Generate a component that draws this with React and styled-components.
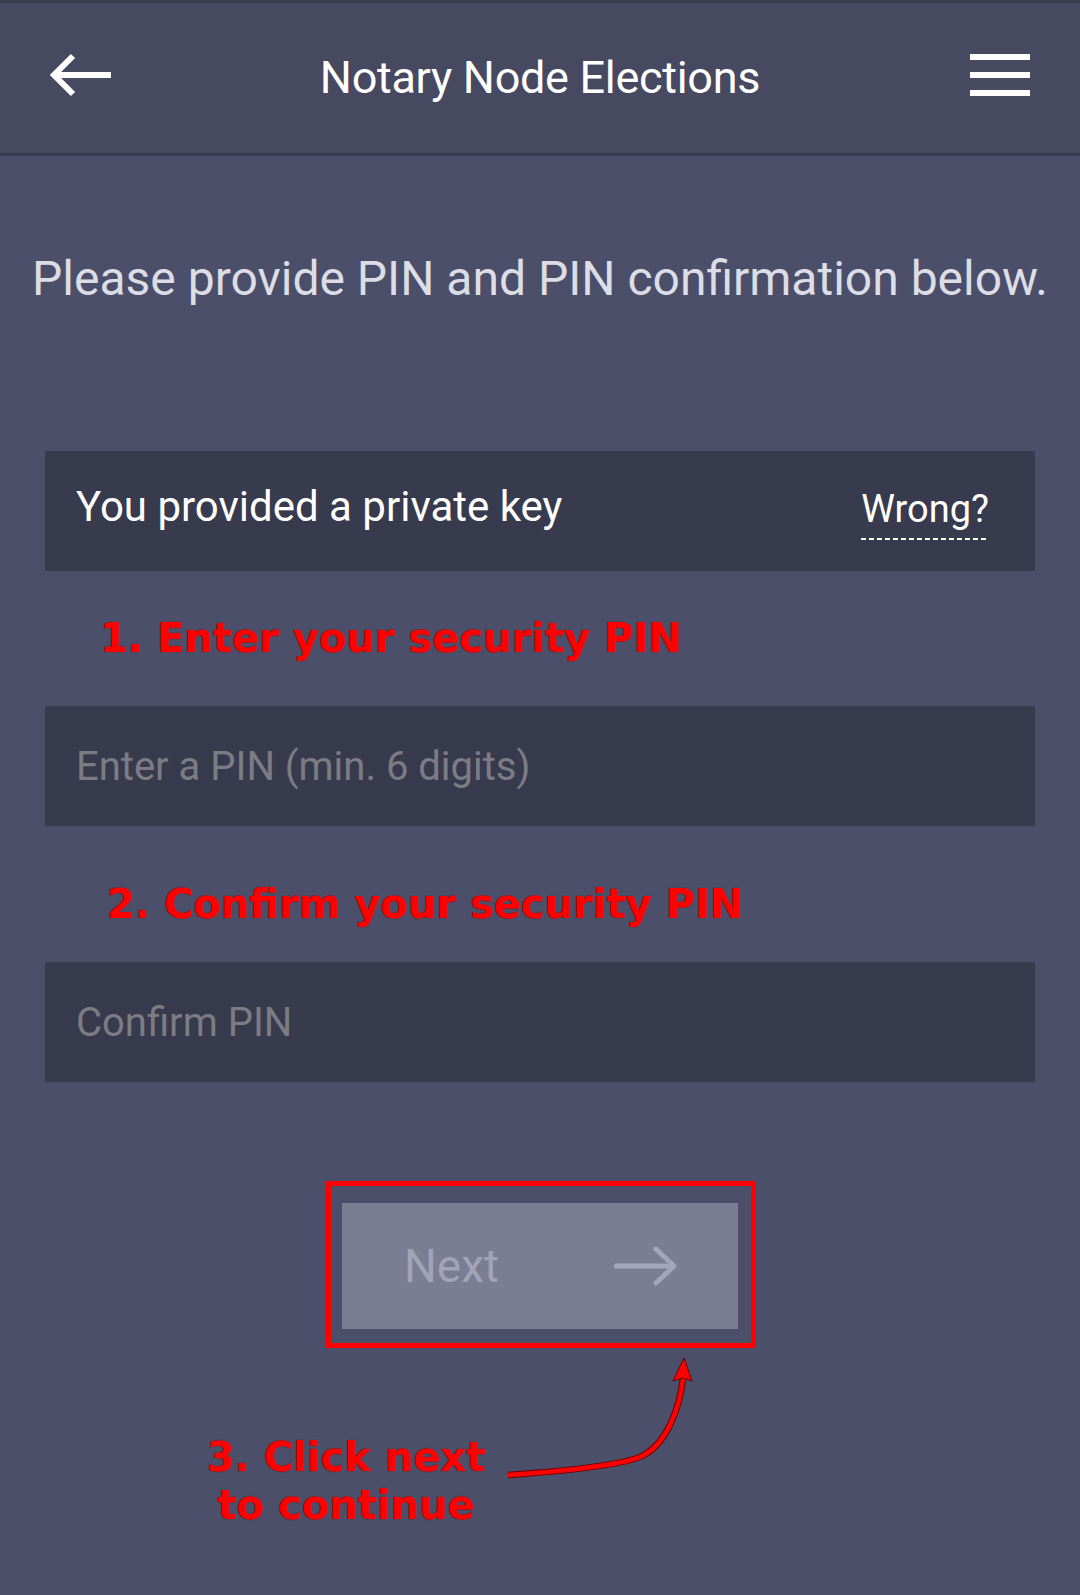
import React from 'react';
import styled, { createGlobalStyle } from 'styled-components';

const GlobalStyle = createGlobalStyle`
  html, body {
    margin: 0;
    padding: 0;
    background: #4b4f6a;
  }
  body {
    font-family: Roboto, "Noto Sans", sans-serif;
  }
`;

const Page = styled.div`
  min-height: 1595px;
  background: #4b4f6a;
  display: flex;
  flex-direction: column;
`;

const TopBar = styled.header`
  height: 150px;
  background: #464960;
  border-top: 3px solid #383a4d;
  border-bottom: 3px solid #3a3c50;
  display: flex;
  align-items: center;
  justify-content: space-between;
  padding: 0 50px;
  position: relative;

  h1 {
    position: absolute;
    left: 0;
    right: 0;
    top: 0;
    bottom: 0;
    margin: 0;
    display: flex;
    align-items: center;
    justify-content: center;
    font-size: 45px;
    font-weight: 400;
    color: #ffffff;
    letter-spacing: -0.3px;
    pointer-events: none;
    padding-bottom: 2px;
  }
`;

const IconButton = styled.button`
  background: none;
  border: 0;
  padding: 0;
  margin-bottom: 6px;
  display: flex;
  z-index: 1;
  cursor: pointer;
`;

const Content = styled.main`
  display: flex;
  flex-direction: column;
  padding: 0 45px;
`;

const Heading = styled.p`
  margin: 95px -20px 0;
  font-size: 48px;
  line-height: 56px;
  color: #dcdde5;
  text-align: center;
  white-space: nowrap;
`;

const KeyRow = styled.div`
  margin-top: 144px;
  height: 120px;
  box-sizing: border-box;
  background: #383a4e;
  display: flex;
  align-items: center;
  justify-content: space-between;
  padding: 0 46px 10px 31px;
  font-size: 42px;
  color: #ffffff;
`;

const WrongLink = styled.a`
  font-size: 38px;
  color: #ffffff;
  text-decoration: none;
  line-height: 44px;
  padding-bottom: 9px;
  margin-top: 14px;
  background-image: repeating-linear-gradient(to right, #ffffff 0 5px, transparent 5px 8px);
  background-repeat: no-repeat;
  background-position: left bottom;
  background-size: 100% 2px;
  cursor: pointer;
`;

const Note = styled.div`
  font-family: "DejaVu Sans", "Liberation Sans", sans-serif;
  font-weight: 700;
  font-size: 40px;
  line-height: 48px;
  color: #ff0000;
  text-shadow: 0 0 1px #5a0000;
  margin-top: ${p => p.$top}px;
  padding-left: ${p => p.$left}px;
  white-space: nowrap;
`;

const PinInput = styled.input`
  margin-top: ${p => p.$top}px;
  height: 120px;
  box-sizing: border-box;
  border: 0;
  outline: none;
  background: #383a4e;
  padding: 0 31px;
  font-family: Roboto, "Noto Sans", sans-serif;
  font-size: 40px;
  color: #ffffff;

  &::placeholder {
    color: #7c7d84;
  }
`;

const Highlight = styled.div`
  align-self: center;
  margin: 99px 0 0 2px;
  border: 5px solid #ff0000;
  padding: 17px 13px 14px 11px;
  display: flex;
`;

const NextButton = styled.button`
  width: 396px;
  height: 126px;
  border: 0;
  background: #7b7d93;
  display: flex;
  align-items: center;
  justify-content: space-between;
  padding: 0 60px 0 62px;
  font-family: Roboto, "Noto Sans", sans-serif;
  font-size: 46px;
  color: #a1a3b6;
  cursor: default;
`;

const Callout = styled.div`
  display: flex;
  align-items: flex-end;
  margin-top: 3px;
  padding-left: 206px;
`;

const CalloutText = styled(Note)`
  width: 280px;
  text-align: center;
  padding-left: 0;
  margin-top: 0;
`;

const BackIcon = () => (
  <svg width="64" height="44" viewBox="0 0 64 44" fill="none">
    <path d="M61 22H5" stroke="#fff" strokeWidth="6" />
    <path d="M23 3L4 22L23 41" stroke="#fff" strokeWidth="6" />
  </svg>
);

const MenuIcon = () => (
  <svg width="60" height="42" viewBox="0 0 60 42" fill="none">
    <rect x="0" y="0" width="60" height="6" fill="#fff" />
    <rect x="0" y="18" width="60" height="6" fill="#fff" />
    <rect x="0" y="36" width="60" height="6" fill="#fff" />
  </svg>
);

const ForwardIcon = () => (
  <svg width="64" height="44" viewBox="0 0 64 44" fill="none">
    <path d="M2 22H58" stroke="#a3a5b8" strokeWidth="5" strokeLinecap="round" />
    <path d="M42 5L60 22L42 39" stroke="#a3a5b8" strokeWidth="5" strokeLinecap="round" strokeLinejoin="round" />
  </svg>
);

const CurvedArrow = () => (
  <svg width="220" height="178" viewBox="0 0 220 178" fill="none">
    <path
      d="M22 124 C 80 120, 140 114, 158 104 C 180 92, 193 60, 197 28"
      stroke="#6a0000"
      strokeWidth="6.5"
    />
    <path
      d="M22 124 C 80 120, 140 114, 158 104 C 180 92, 193 60, 197 28"
      stroke="#ff0000"
      strokeWidth="4.5"
    />
    <path d="M198 7 L187 30 L197 27 L206 30 Z" fill="#ff0000" stroke="#6a0000" strokeWidth="1" />
  </svg>
);

const App = () => {
  return (
    <>
      <GlobalStyle />
      <Page>
        <TopBar>
          <IconButton aria-label="Back">
            <BackIcon />
          </IconButton>
          <h1>Notary Node Elections</h1>
          <IconButton aria-label="Menu">
            <MenuIcon />
          </IconButton>
        </TopBar>

        <Content>
          <Heading>Please provide PIN and PIN confirmation below.</Heading>

          <KeyRow>
            <span>You provided a private key</span>
            <WrongLink>Wrong?</WrongLink>
          </KeyRow>

          <Note $top={43} $left={55}>1. Enter your security PIN</Note>
          <PinInput $top={44} type="password" placeholder="Enter a PIN (min. 6 digits)" />

          <Note $top={54} $left={62}>2. Confirm your security PIN</Note>
          <PinInput $top={34} type="password" placeholder="Confirm PIN" />
        </Content>

        <Highlight>
          <NextButton>
            <span>Next</span>
            <ForwardIcon />
          </NextButton>
        </Highlight>

        <Callout>
          <CalloutText>
            3. Click next
            <br />
            to continue
          </CalloutText>
          <CurvedArrow />
        </Callout>
      </Page>
    </>
  );
};

export default App;
